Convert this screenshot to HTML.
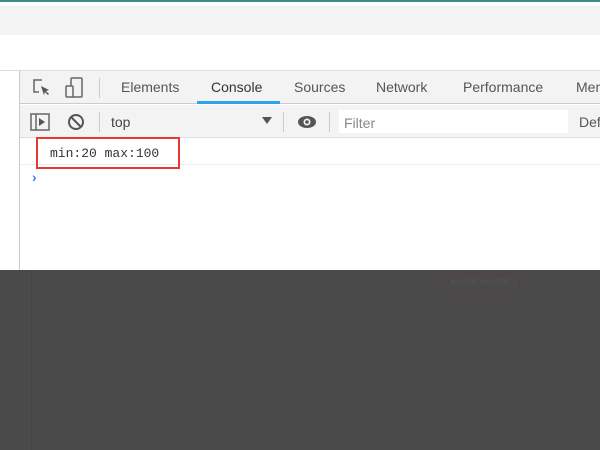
<!DOCTYPE html>
<html><head><style>
*{margin:0;padding:0;box-sizing:border-box}
body{width:600px;height:450px;overflow:hidden;background:#fff;font-family:"Liberation Sans",sans-serif;position:relative}
.a{position:absolute}
.tab{position:absolute;top:79px;font-size:14px;color:#555}
</style></head><body>
<div class="a" style="left:0;top:0;width:600px;height:2px;background:#3a8f80"></div>
<div class="a" style="left:0;top:2px;width:600px;height:4px;background:#fff"></div>
<div class="a" style="left:0;top:6px;width:600px;height:29px;background:#f3f3f4"></div>
<div class="a" style="left:0;top:70px;width:600px;height:1px;background:#ddd"></div>
<div class="a" style="left:19px;top:70px;width:1px;height:200px;background:#ccc"></div>
<div class="a" style="left:20px;top:71px;width:580px;height:33px;background:#f3f3f3;border-bottom:1px solid #ccc"></div>
<svg class="a" style="left:32px;top:78px" width="20" height="20" viewBox="0 0 20 20"><path d="M10 2H2v12h5" fill="none" stroke="#666" stroke-width="1.5"/><path d="M9 8l8 4-3 1 3 3-1 1-3-3-1 3z" fill="#555"/></svg>
<svg class="a" style="left:64px;top:77px" width="20" height="22" viewBox="0 0 20 22"><rect x="7" y="1" width="11" height="19" rx="1" fill="none" stroke="#666" stroke-width="1.5"/><rect x="2" y="9" width="7" height="11" rx="1" fill="#f3f3f3" stroke="#666" stroke-width="1.5"/></svg>
<div class="a" style="left:99px;top:78px;width:1px;height:20px;background:#ccc"></div>
<div class="tab" style="left:121px">Elements</div>
<div class="tab" style="left:211px;color:#333">Console</div>
<div class="a" style="left:197px;top:101px;width:83px;height:3px;background:#2aa4ea"></div>
<div class="tab" style="left:294px">Sources</div>
<div class="tab" style="left:376px">Network</div>
<div class="tab" style="left:463px">Performance</div>
<div class="tab" style="left:576px">Mem</div>
<div class="a" style="left:20px;top:105px;width:580px;height:33px;background:#f3f3f3;border-bottom:1px solid #ddd"></div>
<svg class="a" style="left:30px;top:113px" width="20" height="18"><rect x="1" y="1" width="18" height="16" fill="none" stroke="#666" stroke-width="1.5"/><line x1="6" y1="1" x2="6" y2="17" stroke="#666" stroke-width="1.5"/><path d="M9 5l6 4-6 4z" fill="#555"/></svg>
<svg class="a" style="left:67px;top:113px" width="18" height="18"><circle cx="9" cy="9" r="7" fill="none" stroke="#555" stroke-width="2"/><line x1="4" y1="4" x2="14" y2="14" stroke="#555" stroke-width="2"/></svg>
<div class="a" style="left:99px;top:112px;width:1px;height:20px;background:#ccc"></div>
<div class="a" style="left:111px;top:114px;font-size:14px;color:#444">top</div>
<div class="a" style="left:262px;top:117px;width:0;height:0;border-left:5px solid transparent;border-right:5px solid transparent;border-top:7px solid #555"></div>
<div class="a" style="left:283px;top:112px;width:1px;height:20px;background:#ccc"></div>
<svg class="a" style="left:297px;top:114px" width="20" height="16"><ellipse cx="10" cy="8" rx="9" ry="6" fill="#555"/><circle cx="10" cy="8" r="3.5" fill="#f3f3f3"/><circle cx="10" cy="8" r="1.8" fill="#555"/></svg>
<div class="a" style="left:329px;top:112px;width:1px;height:20px;background:#ccc"></div>
<div class="a" style="left:339px;top:110px;width:229px;height:23px;background:#fff"></div>
<div class="a" style="left:344px;top:115px;font-size:14px;color:#888">Filter</div>
<div class="a" style="left:579px;top:114px;font-size:14px;color:#555">Def</div>
<div class="a" style="left:20px;top:164px;width:580px;height:1px;background:#eee"></div>
<div class="a" style="left:36px;top:137px;width:144px;height:32px;border:2px solid #e53935"></div>
<div class="a" style="left:50px;top:146px;font-family:'Liberation Mono',monospace;font-size:13px;color:#333">min:20 max:100</div>
<div class="a" style="left:32px;top:169px;font-size:14px;color:#3b7cf0;font-weight:bold">›</div>
<div class="a" style="left:0;top:270px;width:600px;height:180px;background:#4a4a4a"></div>
<div class="a" style="left:31px;top:270px;width:1px;height:180px;background:#444"></div>
<div class="a" style="left:441px;top:274px;width:79px;height:20px;border:1px solid #5a3f3f"></div>
<div class="a" style="left:451px;top:279px;font-family:'Liberation Mono',monospace;font-size:7px;color:#555">min:20 max:100</div>
</body></html>
